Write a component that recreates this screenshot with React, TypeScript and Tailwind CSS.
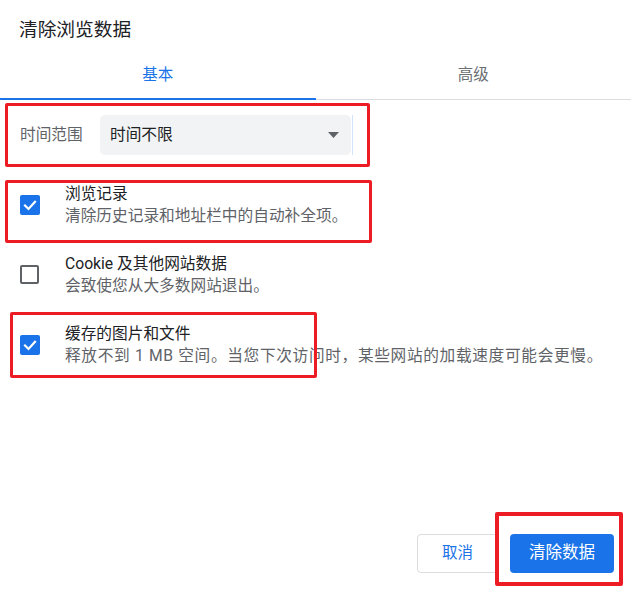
import React from "react";

function CheckBox({ checked }: { checked: boolean }) {
  if (checked) {
    return (
      <div className="w-[20px] h-[20px] rounded-[2px] bg-[#1a73e8] flex items-center justify-center shrink-0">
        <svg width="20" height="20" viewBox="0 0 20 20">
          <path d="M5 10.5 L8.5 14 L15 6.8" fill="none" stroke="#ffffff" strokeWidth="2.2" strokeLinecap="square" />
        </svg>
      </div>
    );
  }
  return <div className="w-[19px] h-[19px] rounded-[2px] border-2 border-[#5f6368] shrink-0" />;
}

function Row({
  checked,
  label,
  desc,
  descClass = "",
}: {
  checked: boolean;
  label: string;
  desc: string;
  descClass?: string;
}) {
  return (
    <div className="flex items-center h-[45px] pl-[20px]">
      <CheckBox checked={checked} />
      <div className={"flex flex-col " + (checked ? "ml-[25px]" : "ml-[26px]")}>
        <div className="text-[15.7px] leading-[23px] text-[#202124] whitespace-nowrap">{label}</div>
        <div className={"text-[15.7px] leading-[22px] text-[#5f6368] whitespace-nowrap " + descClass}>{desc}</div>
      </div>
    </div>
  );
}

export default function App() {
  return (
    <div className="relative w-[631px] h-[591px] bg-white flex flex-col overflow-hidden font-['Roboto','Noto_Sans_CJK_SC',sans-serif]">
      <h1 className="pt-[18px] pl-[19px] text-[18.7px] leading-[24px] text-[#202124] font-normal">清除浏览数据</h1>

      <div className="mt-[8px] flex border-b border-[#dadce0]">
        <div className="relative flex-1 pt-[15px] pb-[14px] text-center text-[15.5px] leading-[20px] text-[#1a73e8]">
          基本
          <span className="absolute left-0 right-0 bottom-[-1px] h-[2px] bg-[#1a73e8]" />
        </div>
        <div className="flex-1 pt-[15px] pb-[14px] text-center text-[15.5px] leading-[20px] text-[#6b6f73]">高级</div>
      </div>

      <div className="mt-[15px] flex items-center h-[40px] pl-[20px]">
        <div className="w-[80px] text-[15.7px] leading-[22px] text-[#5f6368]">时间范围</div>
        <div className="w-[251px] h-[40px] rounded-[5px] bg-[#f1f3f4] flex items-center justify-between pl-[10px] pr-[12px]">
          <span className="text-[15.7px] leading-[22px] text-[#202124]">时间不限</span>
          <svg width="11" height="6" viewBox="0 0 11 6">
            <path d="M0 0 H11 L5.5 6 Z" fill="#5f6368" />
          </svg>
        </div>
        <div className="ml-[1px] w-[1px] h-[40px] bg-[#d2e3fc]" />
      </div>

      <div className="mt-[27px] flex flex-col gap-[25px]">
        <Row checked label="浏览记录" desc="清除历史记录和地址栏中的自动补全项。" />
        <Row checked={false} label="Cookie 及其他网站数据" desc="会致使您从大多数网站退出。" />
        <Row
          checked
          label="缓存的图片和文件"
          desc="释放不到 1 MB 空间。当您下次访问时，某些网站的加载速度可能会更慢。"
          descClass="tracking-[0.65px]"
        />
      </div>

      <div className="mt-auto flex justify-end gap-[12px] pr-[17px] pb-[18px]">
        <button className="w-[81px] h-[39px] rounded-[4px] border border-[#dadce0] bg-white text-[15.5px] text-[#1a73e8]">
          取消
        </button>
        <button className="w-[104px] h-[39px] rounded-[4px] bg-[#1a73e8] text-[16.5px] text-white">清除数据</button>
      </div>

      <div className="pointer-events-none absolute left-[5px] top-[103px] w-[365px] h-[64px] border-[3px] border-[#ed1c24] rounded-[2px]" />
      <div className="pointer-events-none absolute left-[5px] top-[180px] w-[367px] h-[63px] border-[3px] border-[#ed1c24] rounded-[2px]" />
      <div className="pointer-events-none absolute left-[10px] top-[312px] w-[307px] h-[66px] border-[3px] border-[#ed1c24] rounded-[2px]" />
      <div className="pointer-events-none absolute left-[495px] top-[512px] w-[128px] h-[74px] border-[4px] border-[#ed1c24] rounded-[2px]" />
    </div>
  );
}
